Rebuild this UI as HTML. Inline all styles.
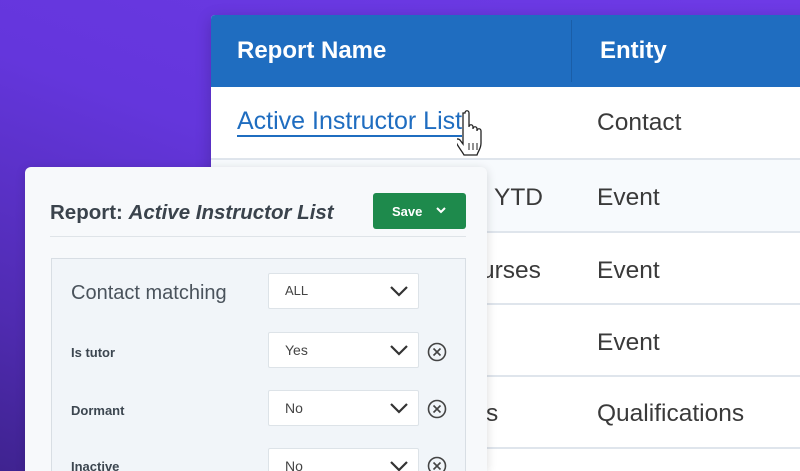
<!DOCTYPE html>
<html style="width:800px;height:471px;overflow:hidden"><head><style>
*{margin:0;padding:0;box-sizing:border-box}
body{width:800px;height:471px;overflow:hidden;position:relative;font-family:"Liberation Sans",sans-serif;
background:linear-gradient(200deg,#6e3ae6 0%,#6436dc 45%,#4f2bb0 80%,#3f2390 100%);}
.abs{position:absolute}
.tbl{left:211px;top:15px;width:600px;height:456px;background:#fff;border-radius:4px 0 0 0;overflow:hidden;box-shadow:0 4px 16px rgba(0,0,0,.2)}
.hdr{left:0;top:0;width:600px;height:72px;background:#1f6dc0}
.hdr span{position:absolute;top:22px;color:#fff;font-weight:bold;font-size:24px}
.row{left:0;width:600px;border-top:2px solid #dfe5ec}
.cell{position:absolute;font-size:24.5px;color:#3a3a3a}
.panel{left:25px;top:167px;width:462px;height:304px;background:#f7f9fb;border-radius:6px 6px 0 0;box-shadow:0 2px 10px rgba(0,0,0,.15);overflow:hidden}
.sel{position:absolute;left:243px;width:151px;height:36px;background:#fff;border:1px solid #dde3e8;border-radius:2px;font-size:14px;color:#444}
.sel span{position:absolute;left:16px;top:9px}
.sel svg{position:absolute;right:9px;top:11px}
.lbl{position:absolute;left:46px;font-size:13px;font-weight:bold;color:#3c4650}
.x{position:absolute;left:402px}
</style></head><body>
<div class="abs tbl">
 <div class="abs hdr"><span style="left:26px">Report Name</span><span style="left:389px">Entity</span>
  <div class="abs" style="left:360px;top:5px;width:1px;height:62px;background:#1a5ea8"></div></div>
 <div class="abs row" style="top:72px;height:72px;border-top:none"></div>
 <div class="abs" style="left:26px;top:93px;font-size:25px;color:#1f6dc0;border-bottom:2px solid #1f6dc0;line-height:27px">Active Instructor List</div>
 <div class="cell" style="left:386px;top:94px">Contact</div>
 <div class="abs row" style="top:143px;height:74px;background:#f7fafd"></div>
 <div class="cell" style="left:283px;top:169px">YTD</div>
 <div class="cell" style="left:386px;top:169px">Event</div>
 <div class="abs row" style="top:216px;height:73px"></div>
 <div class="cell" style="left:270px;top:242px">urses</div>
 <div class="cell" style="left:386px;top:242px">Event</div>
 <div class="abs row" style="top:288px;height:73px"></div>
 <div class="cell" style="left:386px;top:314px">Event</div>
 <div class="abs row" style="top:360px;height:73px"></div>
 <div class="cell" style="left:275px;top:385px">s</div>
 <div class="cell" style="left:386px;top:385px">Qualifications</div>
 <div class="abs row" style="top:432px;height:60px"></div>
 <svg class="abs" style="left:246px;top:94px" width="40" height="62" viewBox="0 0 40 62"><path d="M8 4c0-3 4-3 4 0v14c0-3 4-3 4 0v2c0-3 4-3 4 0v2c0-3 4-3 4 0v12c0 6-3 8-4 12h-13c-2-4-6-8-8-13-1-3 2-4 4-2l3 4V4z" fill="#fff" stroke="#222" stroke-width="1.3"/><path d="M12 34v7M16 34v7M20 34v7" stroke="#222" stroke-width="1"/></svg>
</div>
<div class="abs panel">
 <div class="abs" style="left:25px;top:34px;font-size:20.5px;font-weight:bold;color:#3a434c">Report: <i>Active Instructor List</i></div>
 <div class="abs" style="left:348px;top:26px;width:93px;height:36px;background:#1e8a4c;border-radius:3px;color:#fff;font-size:13px;font-weight:bold">
  <span class="abs" style="left:19px;top:11px">Save</span>
  <svg class="abs" style="left:63px;top:14px" width="10" height="8"><path d="M1 1l4 4 4-4" stroke="#fff" stroke-width="2" fill="none"/></svg></div>
 <div class="abs" style="left:25px;top:69px;width:416px;height:1px;background:#dfe4e8"></div>
 <div class="abs" style="left:26px;top:91px;width:415px;height:240px;background:#f1f5f9;border:1px solid #d8dee4"></div>
 <div class="abs" style="left:46px;top:115px;font-size:20px;color:#4a535c">Contact matching</div>
 <div class="sel" style="top:106px"><span style="font-size:13px">ALL</span><svg width="20" height="12"><path d="M2 2l8 8 8-8" stroke="#333" stroke-width="2.2" fill="none"/></svg></div>
 <div class="lbl" style="top:178px">Is tutor</div>
 <div class="sel" style="top:165px"><span>Yes</span><svg width="20" height="12"><path d="M2 2l8 8 8-8" stroke="#333" stroke-width="2.2" fill="none"/></svg></div>
 <svg class="x" style="top:175px" width="20" height="20"><circle cx="10" cy="10" r="8.5" stroke="#444" stroke-width="1.6" fill="none"/><path d="M6.5 6.5l7 7M13.5 6.5l-7 7" stroke="#444" stroke-width="1.6"/></svg>
 <div class="lbl" style="top:236px">Dormant</div>
 <div class="sel" style="top:223px"><span>No</span><svg width="20" height="12"><path d="M2 2l8 8 8-8" stroke="#333" stroke-width="2.2" fill="none"/></svg></div>
 <svg class="x" style="top:232px" width="20" height="20"><circle cx="10" cy="10" r="8.5" stroke="#444" stroke-width="1.6" fill="none"/><path d="M6.5 6.5l7 7M13.5 6.5l-7 7" stroke="#444" stroke-width="1.6"/></svg>
 <div class="lbl" style="top:292px">Inactive</div>
 <div class="sel" style="top:281px"><span>No</span><svg width="20" height="12"><path d="M2 2l8 8 8-8" stroke="#333" stroke-width="2.2" fill="none"/></svg></div>
 <svg class="x" style="top:289px" width="20" height="20"><circle cx="10" cy="10" r="8.5" stroke="#444" stroke-width="1.6" fill="none"/><path d="M6.5 6.5l7 7M13.5 6.5l-7 7" stroke="#444" stroke-width="1.6"/></svg>
</div>
</body></html>
